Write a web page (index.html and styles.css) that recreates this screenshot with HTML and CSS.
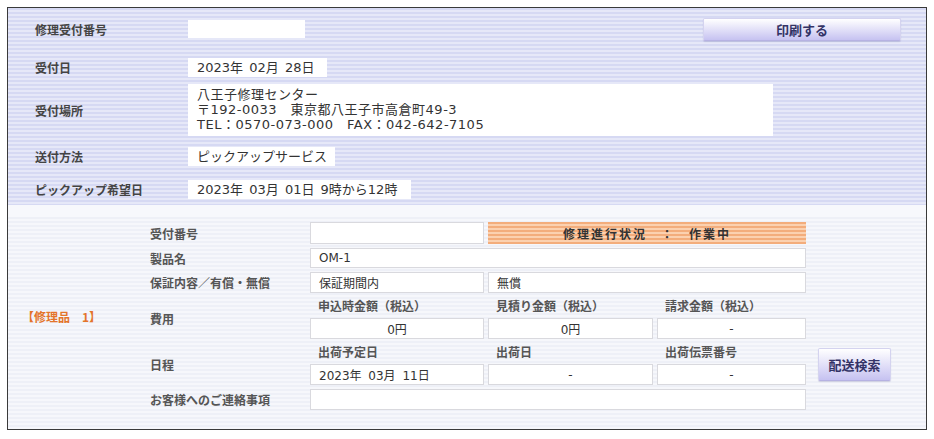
FILE: index.html
```html
<!DOCTYPE html>
<html lang="ja">
<head>
  <meta charset="UTF-8" />
  <meta name="viewport" content="width=device-width, initial-scale=1.0" />
  <title>修理状況</title>
  <link rel="stylesheet" href="styles.css">
</head>
<body>

  <div class="frame">

    <div class="receipt">
      <div class="row r1">
        <div class="label">修理受付番号</div>
        <div class="value blank"></div>
        <button class="btn print">印刷する</button>
      </div>
      <div class="row r2">
        <div class="label">受付日</div>
        <div class="value w2">2023年 02月 28日</div>
      </div>
      <div class="row r3">
        <div class="label">受付場所</div>
        <div class="value address">八王子修理センター<br>〒192-0033　東京都八王子市高倉町49-3<br>TEL：0570-073-000　FAX：042-642-7105</div>
      </div>
      <div class="row r4">
        <div class="label">送付方法</div>
        <div class="value w4">ピックアップサービス</div>
      </div>
      <div class="row r5">
        <div class="label">ピックアップ希望日</div>
        <div class="value w5">2023年 03月 01日 9時から12時</div>
      </div>
    </div>

    <div class="item">
      <div class="item-name">【修理品　1】</div>

      <div class="field f1">受付番号</div>
      <div class="box c1 g1"></div>
      <div class="status g1">修理進行状況　：　作業中</div>

      <div class="field f2">製品名</div>
      <div class="box wide g2">OM-1</div>

      <div class="field f3">保証内容／有償・無償</div>
      <div class="box c1 g3">保証期間内</div>
      <div class="box c23 g3">無償</div>

      <div class="field f4">費用</div>
      <div class="sub c1 g4">申込時金額（税込）</div>
      <div class="sub c2 g4">見積り金額（税込）</div>
      <div class="sub c3 g4">請求金額（税込）</div>
      <div class="box num c1 g5">0円</div>
      <div class="box num c2 g5">0円</div>
      <div class="box num c3 g5">-</div>

      <div class="field f6">日程</div>
      <div class="sub c1 g6">出荷予定日</div>
      <div class="sub c2 g6">出荷日</div>
      <div class="sub c3 g6">出荷伝票番号</div>
      <div class="box c1 g7">2023年 03月 11日</div>
      <div class="box num c2 g7">-</div>
      <div class="box num c3 g7">-</div>

      <div class="field f8">お客様へのご連絡事項</div>
      <div class="box wide g8"></div>

      <button class="btn track">配送検索</button>
    </div>

  </div>

</body>
</html>
```

FILE: styles.css
```css
body {
  margin: 0;
  padding: 7px;
  background: #fff;
  font-family: "Noto Sans CJK JP", "Noto Sans", sans-serif;
  color: #333;
}
.frame {
  width: 918px;
  border: 1px solid #3a3a3a;
}

/* upper block */
.receipt {
  background: repeating-linear-gradient(#d6d9f3 0 2px, #e6e8f8 2px 4px);
  padding: 0 0 3px 27px;
}
.row {
  display: flex;
  align-items: center;
}
.r1 { height: 42px; }
.r2 { height: 34px; }
.r3 { height: 52px; }
.r4 { height: 40px; }
.r5 { height: 26px; }
.label {
  width: 153px;
  flex: none;
  font-size: 12px;
  font-weight: bold;
  color: #444;
}
.value {
  box-sizing: border-box;
  background: #fff;
  font-family: "DejaVu Sans", "Noto Sans CJK JP", sans-serif;
  font-size: 13px;
  line-height: 19px;
  padding: 0 10px 0 9px;
  white-space: nowrap;
  word-spacing: 2px;
}
.value.blank {
  width: 117px;
  height: 18px;
  padding: 0;
}
.w2 { width: 139px; }
.w4 { width: 147px; }
.w5 { width: 223px; }
.value.address {
  width: 585px;
  line-height: 15px;
  letter-spacing: 0.5px;
  padding: 3px 10px 4px 9px;
}
.btn {
  font-family: inherit;
  font-weight: bold;
  font-size: 13px;
  color: #333366;
  background: linear-gradient(#ffffff, #c6c2f1);
  border: 1px solid #d4d3ef;
  border-bottom-color: #b6b2e2;
  border-radius: 2px;
  box-shadow: 0 1px 1px rgba(80, 80, 140, 0.2);
  cursor: pointer;
}
.print {
  margin-left: auto;
  margin-right: 25px;
  width: 198px;
  height: 23px;
  padding: 0;
}

/* lower block */
.item {
  background:
    linear-gradient(#f7f8fc 0 12px, transparent 12px),
    repeating-linear-gradient(#eef0f7 0 2px, #f6f7fb 2px 4px);
  padding: 17px 0 19px 14px;
  display: grid;
  grid-template-columns: 124px 156px 174px 165px 149px 1fr;
  grid-template-rows: 22px 20px 21px 17px 21px 17px 21px 21px;
  gap: 4px;
  font-size: 12px;
}
.item-name {
  grid-column: 1;
  grid-row: 1 / 9;
  align-self: center;
  color: #e4742a;
  font-weight: bold;
}
.field {
  grid-column: 2;
  align-self: center;
  font-weight: bold;
  color: #555;
}
.f1 { grid-row: 1; }
.f2 { grid-row: 2; }
.f3 { grid-row: 3; }
.f4 { grid-row: 4 / 6; }
.f6 { grid-row: 6 / 8; }
.f8 { grid-row: 8; }

.g1 { grid-row: 1; }
.g2 { grid-row: 2; }
.g3 { grid-row: 3; }
.g4 { grid-row: 4; }
.g5 { grid-row: 5; }
.g6 { grid-row: 6; }
.g7 { grid-row: 7; }
.g8 { grid-row: 8; }
.c1 { grid-column: 3; }
.c2 { grid-column: 4; }
.c3 { grid-column: 5; }
.c23 { grid-column: 4 / 6; }
.wide { grid-column: 3 / 6; }

.box {
  background: #fff;
  border: 1px solid #d9d9de;
  padding: 0 8px;
  display: flex;
  align-items: center;
  font-family: "DejaVu Sans", "Noto Sans CJK JP", sans-serif;
  word-spacing: 3px;
  color: #333;
}
.box.num {
  justify-content: center;
}
.sub {
  padding-left: 8px;
  align-self: center;
  font-weight: bold;
  color: #555;
}
.status {
  grid-column: 4 / 6;
  background: repeating-linear-gradient(#f3ad7c 0 2px, #fbd1b0 2px 4px);
  display: flex;
  align-items: center;
  justify-content: center;
  font-weight: bold;
  letter-spacing: 2px;
  color: #333;
}
.track {
  grid-column: 6;
  grid-row: 6 / 8;
  align-self: center;
  justify-self: start;
  margin-left: 8px;
  width: 73px;
  height: 33px;
  padding: 0;
}
```
